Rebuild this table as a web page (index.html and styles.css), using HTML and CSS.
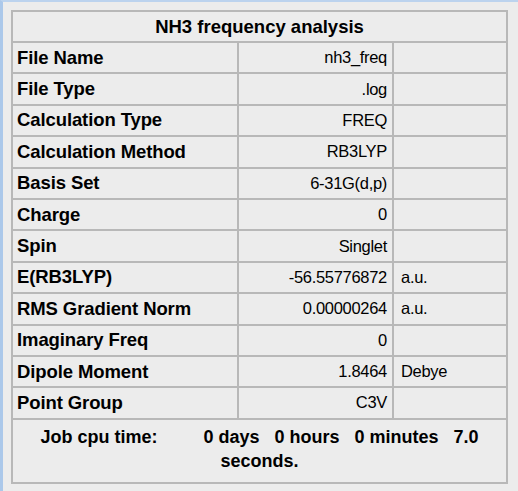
FILE: index.html
```html
<!DOCTYPE html>
<html>
<head>
<meta charset="utf-8">
<link rel="stylesheet" href="styles.css">
</head>
<body>
<div class="frame">
  <table class="props">
    <colgroup><col class="c1"><col class="c2"><col class="c3"></colgroup>
    <thead>
      <tr><th colspan="3" class="title">NH3 frequency analysis</th></tr>
    </thead>
    <tbody>
      <tr><td class="lbl">File Name</td><td class="val">nh3_freq</td><td class="unit"></td></tr>
      <tr><td class="lbl">File Type</td><td class="val">.log</td><td class="unit"></td></tr>
      <tr><td class="lbl">Calculation Type</td><td class="val">FREQ</td><td class="unit"></td></tr>
      <tr><td class="lbl">Calculation Method</td><td class="val">RB3LYP</td><td class="unit"></td></tr>
      <tr><td class="lbl">Basis Set</td><td class="val">6-31G(d,p)</td><td class="unit"></td></tr>
      <tr><td class="lbl">Charge</td><td class="val">0</td><td class="unit"></td></tr>
      <tr><td class="lbl">Spin</td><td class="val">Singlet</td><td class="unit"></td></tr>
      <tr><td class="lbl">E(RB3LYP)</td><td class="val">-56.55776872</td><td class="unit">a.u.</td></tr>
      <tr><td class="lbl">RMS Gradient Norm</td><td class="val">0.00000264</td><td class="unit">a.u.</td></tr>
      <tr><td class="lbl">Imaginary Freq</td><td class="val">0</td><td class="unit"></td></tr>
      <tr><td class="lbl">Dipole Moment</td><td class="val">1.8464</td><td class="unit">Debye</td></tr>
      <tr><td class="lbl">Point Group</td><td class="val">C3V</td><td class="unit"></td></tr>
    </tbody>
    <tfoot>
      <tr><td colspan="3" class="foot">Job cpu time:<span class="g1"></span>0 days<span class="g2"></span>0 hours<span class="g2"></span>0 minutes<span class="g2"></span>7.0<br>seconds.</td></tr>
    </tfoot>
  </table>
</div>
</body>
</html>
```
FILE: styles.css
```css
html, body {
  margin: 0;
  padding: 0;
  background: #ececec;
}
body {
  width: 518px;
  height: 491px;
  overflow: hidden;
}
.frame {
  box-sizing: border-box;
  height: 491px;
  border-left: 3px solid #abc8ea;
  border-top: 2px solid #bcd3ee;
  padding: 8px 0 0 8px;
}
.props {
  border-collapse: collapse;
  table-layout: fixed;
  width: 497px;
  border: 2px solid #7f7f7f;
  font-family: "Liberation Sans", Arial, sans-serif;
  color: #000;
}
.c1 { width: 226px; }
.c2 { width: 155px; }
.c3 { width: 114px; }
.props td, .props th {
  border: 2px solid #b8b8b8;
  padding: 0;
  height: 29.4px;
  white-space: nowrap;
}
.props .title {
  font-weight: bold;
  font-size: 18.5px;
  text-align: center;
  height: 29px;
}
.lbl {
  font-weight: bold;
  font-size: 18.5px;
  padding-left: 4px !important;
  letter-spacing: -0.1px;
}
.val {
  font-size: 16.5px;
  text-align: right;
  padding-right: 5px !important;
  letter-spacing: -0.3px;
}
.unit {
  font-size: 16.5px;
  padding-left: 7px !important;
  letter-spacing: -0.3px;
}
.props .foot {
  border-top: 2px solid #b8b8b8;
  height: 57px;
  text-align: center;
  font-weight: bold;
  font-size: 18px;
  line-height: 24px;
  padding-top: 5px;
  vertical-align: top;
  white-space: normal;
}
.g1 { display: inline-block; width: 46px; }
.g2 { display: inline-block; width: 15px; }
```
